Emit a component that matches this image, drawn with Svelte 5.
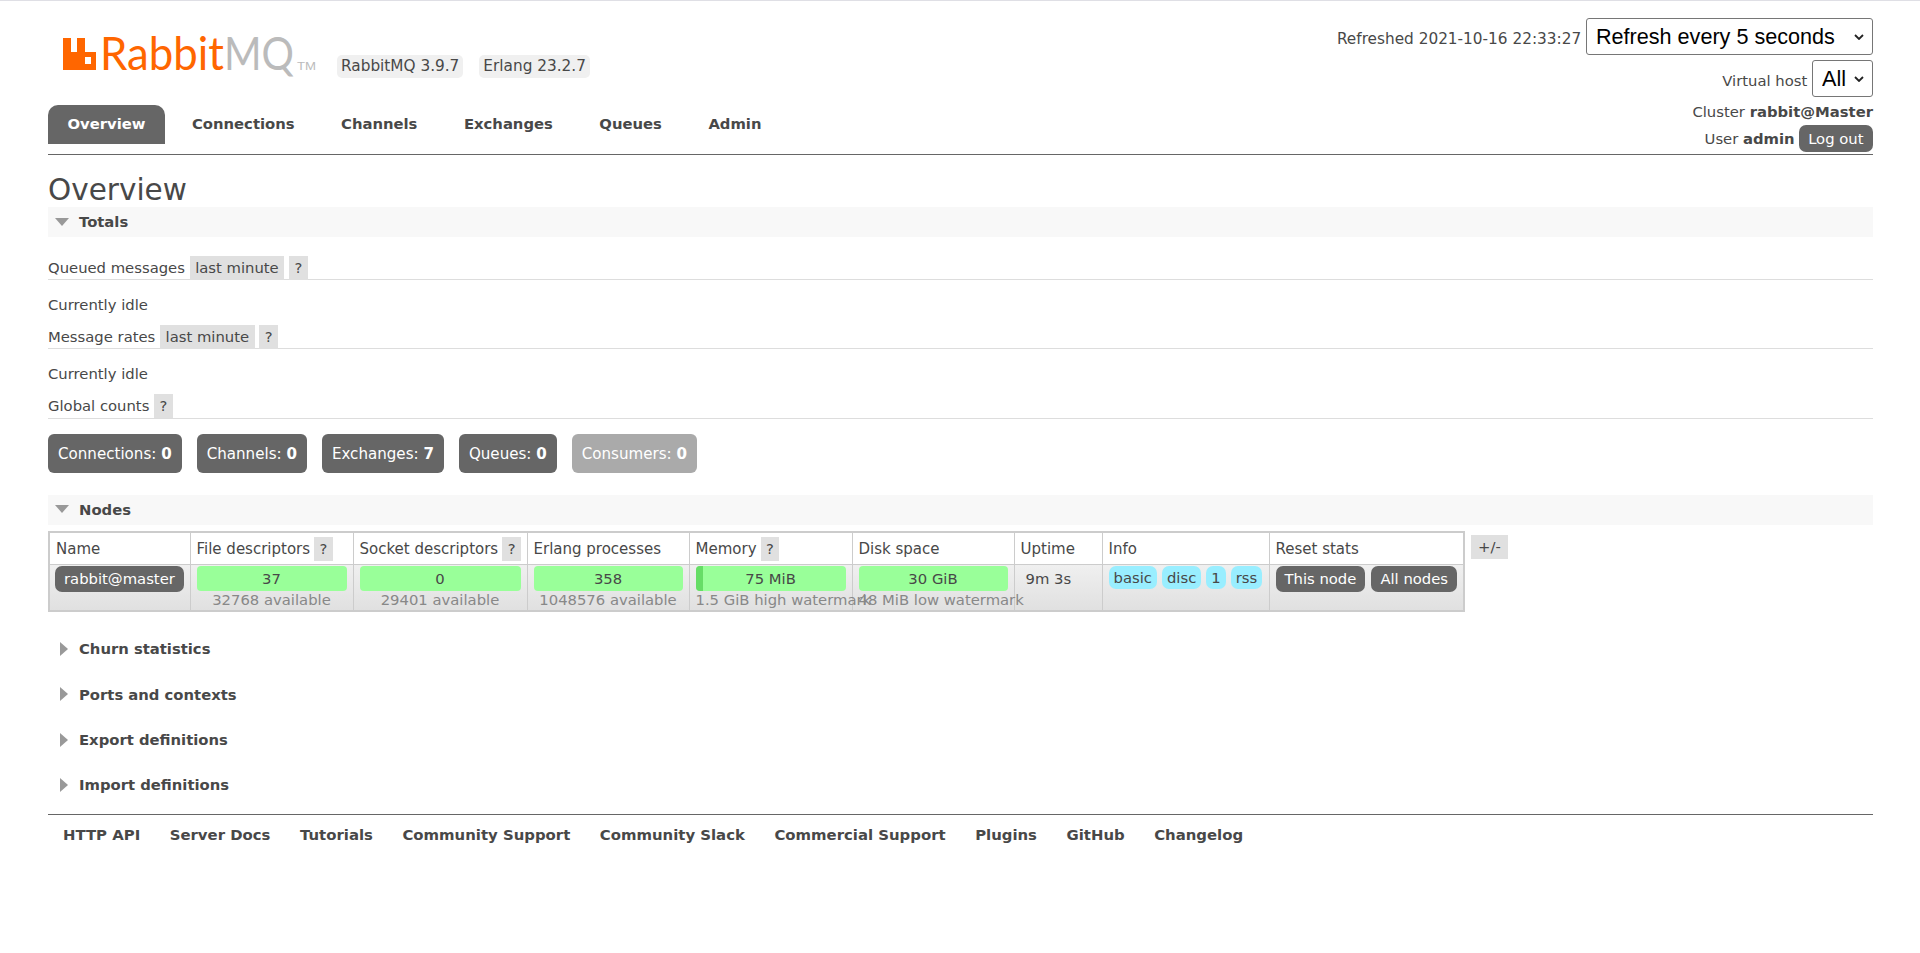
<script lang="ts">
  const tabs = ["Overview", "Connections", "Channels", "Exchanges", "Queues", "Admin"];

  const counts = [
    { label: "Connections", value: 0 },
    { label: "Channels", value: 0 },
    { label: "Exchanges", value: 7 },
    { label: "Queues", value: 0 },
    { label: "Consumers", value: 0, disabled: true },
  ];

  const columns = [
    { title: "Name", width: 141 },
    { title: "File descriptors", width: 163, help: true },
    { title: "Socket descriptors", width: 174, help: true },
    { title: "Erlang processes", width: 162 },
    { title: "Memory", width: 163, help: true },
    { title: "Disk space", width: 162 },
    { title: "Uptime", width: 88 },
    { title: "Info", width: 167 },
    { title: "Reset stats", width: 195 },
  ];

  const gauges = [
    { value: "37", sub: "32768 available" },
    { value: "0", sub: "29401 available" },
    { value: "358", sub: "1048576 available" },
    { value: "75 MiB", sub: "1.5 GiB high watermark", fill: 5 },
    { value: "30 GiB", sub: "48 MiB low watermark" },
  ];

  const info = ["basic", "disc", "1", "rss"];
  const closed = ["Churn statistics", "Ports and contexts", "Export definitions", "Import definitions"];
  const links = ["HTTP API", "Server Docs", "Tutorials", "Community Support", "Community Slack", "Commercial Support", "Plugins", "GitHub", "Changelog"];
</script>

<div class="outer">
  <header class="header">
    <div class="brand">
      <div class="logo-row">
        <svg class="logo" width="258" height="44" viewBox="0 0 258 44" aria-label="RabbitMQ">
          <path fill="#f60" fill-rule="evenodd" d="M2 4h8v14h6V4h8v14h11v18H2zM24 23v7h6v-7z" />
          <text class="logo-text" x="39" y="36" fill="#f60" textLength="124" lengthAdjust="spacingAndGlyphs">Rabbit</text>
          <text class="logo-text" x="163" y="36" fill="#bbb" textLength="70" lengthAdjust="spacingAndGlyphs">MQ</text>
          <text class="logo-tm" x="236" y="36" fill="#bbb" textLength="19" lengthAdjust="spacingAndGlyphs">TM</text>
        </svg>
        <span class="version">RabbitMQ 3.9.7</span>
        <span class="version">Erlang 23.2.7</span>
      </div>
      <nav class="tabs">
        {#each tabs as tab, i}
          <a href="#{tab}" class="tab" class:selected={i === 0}>{tab}</a>
        {/each}
      </nav>
    </div>

    <div class="status">
      <div class="status-row refreshed">
        Refreshed 2021-10-16 22:33:27
        <select class="refresh">
          <option>Refresh every 5 seconds</option>
        </select>
      </div>
      <div class="status-row">
        Virtual host
        <select class="vhost">
          <option>All</option>
        </select>
      </div>
      <div class="status-row cluster">Cluster <b>rabbit@Master</b></div>
      <div class="status-row user">User <b>admin</b> <button class="logout">Log out</button></div>
    </div>
  </header>

  <h1>Overview</h1>

  <section>
    <h2 class="bar"><span class="arrow-down"></span>Totals</h2>
    <div class="totals">
      <h3 class="sub queued">Queued messages <span class="chip">last minute</span> <span class="chip">?</span></h3>
      <p class="idle">Currently idle</p>
      <h3 class="sub">Message rates <span class="chip">last minute</span> <span class="chip">?</span></h3>
      <p class="idle">Currently idle</p>
      <h3 class="sub">Global counts <span class="chip">?</span></h3>
      <div class="counts">
        {#each counts as c}
          <div class="count" class:disabled={c.disabled}>{c.label}: <b>{c.value}</b></div>
        {/each}
      </div>
    </div>
  </section>

  <section class="nodes">
    <h2 class="bar"><span class="arrow-down"></span>Nodes</h2>
    <div class="table-row">
      <table>
        <colgroup>
          {#each columns as col}
            <col style="width: {col.width}px" />
          {/each}
        </colgroup>
        <thead>
          <tr>
            {#each columns as col}
              <th>{col.title}{#if col.help}<span class="chip help">?</span>{/if}</th>
            {/each}
          </tr>
        </thead>
        <tbody>
          <tr>
            <td class="name"><span class="pill">rabbit@master</span></td>
            {#each gauges as g}
              <td>
                <div class="gauge">
                  {#if g.fill}<span class="gauge-fill" style="width: {g.fill}%"></span>{/if}
                  <span class="gauge-value">{g.value}</span>
                </div>
                <div class="gauge-sub">{g.sub}</div>
              </td>
            {/each}
            <td class="uptime">9m 3s</td>
            <td>
              <div class="tags">
                {#each info as tag}
                  <span class="tag">{tag}</span>
                {/each}
              </div>
            </td>
            <td>
              <div class="tags reset">
                <span class="pill">This node</span>
                <span class="pill">All nodes</span>
              </div>
            </td>
          </tr>
        </tbody>
      </table>
      <span class="chip toggle">+/-</span>
    </div>
  </section>

  <div class="closed">
    {#each closed as title}
      <h2 class="closed-title"><span class="arrow-right"></span>{title}</h2>
    {/each}
  </div>

  <footer class="footer">
    {#each links as link}
      <a href="#{link}">{link}</a>
    {/each}
  </footer>
</div>

<style>
  :global(body) {
    margin: 0;
    font: 14.8px "DejaVu Sans", Verdana, sans-serif;
    color: #484848;
    background: #fff;
  }

  .outer {
    border-top: 1px solid #dfdfe5;
    padding: 0 47px 0 48px;
    height: 952px;
    box-sizing: border-box;
  }

  .header {
    display: flex;
    justify-content: space-between;
    height: 153px;
    border-bottom: 1px solid #666;
  }

  .brand {
    display: flex;
    flex-direction: column;
  }

  .logo-row {
    display: flex;
    align-items: flex-start;
    height: 104px;
    padding: 33px 0 0 13px;
    box-sizing: border-box;
  }

  .logo {
    flex: none;
    margin-right: -2px;
  }

  .logo-text {
    font-family: Lato, "Liberation Sans", sans-serif;
    font-size: 47px;
    font-weight: 400;
  }

  .logo-tm {
    font-family: "Liberation Sans", sans-serif;
    font-size: 11px;
  }

  .version {
    margin: 21px 0 0 20px;
    padding: 0 4px;
    height: 23px;
    line-height: 23px;
    background: #f0f0f0;
    border-radius: 5px;
    white-space: nowrap;
    font-size: 15.3px;
  }

  .version + .version {
    margin-left: 16px;
  }

  .tabs {
    display: flex;
    height: 39px;
  }

  .tab {
    padding: 0 19.5px;
    margin-right: 7.5px;
    line-height: 37px;
    font-weight: bold;
    color: #484848;
    text-decoration: none;
    border-radius: 10px 10px 0 0;
  }

  .tab.selected {
    background: #666;
    color: #fff;
  }

  .status {
    display: flex;
    flex-direction: column;
    align-items: flex-end;
    padding-top: 17px;
  }

  .status-row {
    display: flex;
    align-items: baseline;
    white-space: pre-wrap;
  }

  .status-row + .status-row {
    margin-top: 5px;
  }

  .refreshed {
    font-size: 15.3px;
  }

  select {
    appearance: none;
    padding: 0 0 0 9px;
    font-family: "Liberation Sans", Arial, sans-serif;
    font-size: 21.6px;
    height: 37px;
    color: #000;
    background: #fff url("data:image/svg+xml,%3Csvg xmlns='http://www.w3.org/2000/svg' viewBox='0 0 10 6'%3E%3Cpath d='M1 1l4 4 4-4' fill='none' stroke='%23222' stroke-width='1.8'/%3E%3C/svg%3E") no-repeat right 8px center / 10px 6px;
    border: 1px solid #767676;
    border-radius: 3px;
  }

  .refresh {
    width: 287px;
  }

  .vhost {
    width: 61px;
  }

  .status-row.cluster {
    margin-top: 6px;
    height: 22px;
  }

  .status-row.user {
    margin-top: 0;
    align-items: center;
  }

  .logout {
    margin-left: 4px;
    padding: 0 9.5px;
    height: 27px;
    border: 0;
    border-radius: 7px;
    background: #666;
    color: #fff;
    font: inherit;
  }

  h1 {
    margin: 0;
    padding-top: 18px;
    height: 52px;
    box-sizing: border-box;
    font-size: 29.5px;
    font-weight: normal;
    line-height: 34px;
    color: #484848;
  }

  h2 {
    margin: 0;
    font-size: 14.8px;
    font-weight: bold;
  }

  .bar {
    display: flex;
    align-items: center;
    height: 30px;
    box-sizing: border-box;
    padding: 0 0 1px 7px;
    background: #f8f8f8;
  }

  .arrow-down {
    width: 0;
    height: 0;
    margin-right: 10px;
    border-style: solid;
    border-width: 8px 7px 0;
    border-color: #999 transparent transparent;
  }

  .totals {
    padding-top: 18.6px;
  }

  .sub {
    margin: 0;
    font-size: 14.8px;
    font-weight: normal;
    line-height: 24px;
    height: 23.4px;
    border-bottom: 1px solid #ddd;
  }

  .chip {
    display: inline-block;
    padding: 0 5.5px;
    height: 24px;
    line-height: 24px;
    background: #e0e0e0;
    font-size: 14.8px;
    font-weight: normal;
  }

  .chip.help {
    margin-left: 4px;
  }

  .idle {
    margin: 0;
    line-height: 18px;
    padding: 16px 0 11px;
  }

  .counts {
    display: flex;
    gap: 15px;
    margin-top: 15px;
  }

  .count {
    height: 39px;
    line-height: 41px;
    padding: 0 10px;
    font-size: 15.1px;
    background: #666;
    color: #fff;
    border-radius: 6px;
  }

  .count.disabled {
    background: #aaa;
  }

  .nodes {
    margin-top: 22px;
  }

  .table-row {
    display: flex;
    align-items: flex-start;
    gap: 6px;
    margin-top: 6px;
  }

  .toggle {
    margin-top: 4px;
    padding: 0 7px;
  }

  table {
    table-layout: fixed;
    width: 1415px;
    border-collapse: collapse;
    border: 2px solid #ccc;
    flex: none;
  }

  th {
    height: 29px;
    padding: 2px 6px 0;
    font-size: 15px;
    font-weight: normal;
    text-align: left;
    background: #fff;
    border: 1px solid #ccc;
    white-space: nowrap;
    overflow: hidden;
  }

  tbody tr {
    background: linear-gradient(#f0f0f0, #e0e0e0);
  }

  td {
    height: 47px;
    padding: 1px 6px 0;
    box-sizing: border-box;
    vertical-align: top;
    border: 1px solid #ccc;
    border-bottom: 0;
    white-space: nowrap;
  }

  td.name {
    padding-left: 5px;
  }

  .pill {
    display: inline-block;
    height: 26px;
    line-height: 26px;
    padding: 0 9px;
    background: #666;
    color: #fff;
    border-radius: 7px;
  }

  .gauge {
    position: relative;
    height: 25px;
    line-height: 25px;
    text-align: center;
    background: #9f9;
    border-radius: 4px;
    overflow: hidden;
  }

  .gauge-fill {
    position: absolute;
    left: 0;
    top: 0;
    bottom: 0;
    background: #6d6;
  }

  .gauge-value {
    position: relative;
  }

  .gauge-sub {
    height: 18px;
    line-height: 18px;
    text-align: center;
    color: #888;
  }

  td:nth-child(5) .gauge-sub,
  td:nth-child(6) .gauge-sub {
    text-align: left;
  }

  .uptime {
    line-height: 26px;
    padding-left: 11px;
  }

  .tags {
    display: flex;
    gap: 5px;
  }

  .reset {
    gap: 6px;
  }

  .tag {
    height: 23px;
    line-height: 23px;
    padding: 0 5px;
    background: #9ef;
    border-radius: 7px;
  }

  .closed {
    margin-top: 14px;
  }

  .closed-title {
    display: flex;
    align-items: center;
    height: 45.3px;
    padding-left: 12px;
  }

  .arrow-right {
    width: 0;
    height: 0;
    margin-right: 11px;
    border-style: solid;
    border-width: 7px 0 7px 8px;
    border-color: transparent transparent transparent #999;
  }

  .footer {
    display: flex;
    gap: 29.5px;
    margin-top: 7px;
    padding: 11px 0 0 15px;
    border-top: 1px solid #666;
  }

  .footer a {
    font-size: 14.9px;
    font-weight: bold;
    color: #484848;
    text-decoration: none;
    white-space: nowrap;
  }
</style>
